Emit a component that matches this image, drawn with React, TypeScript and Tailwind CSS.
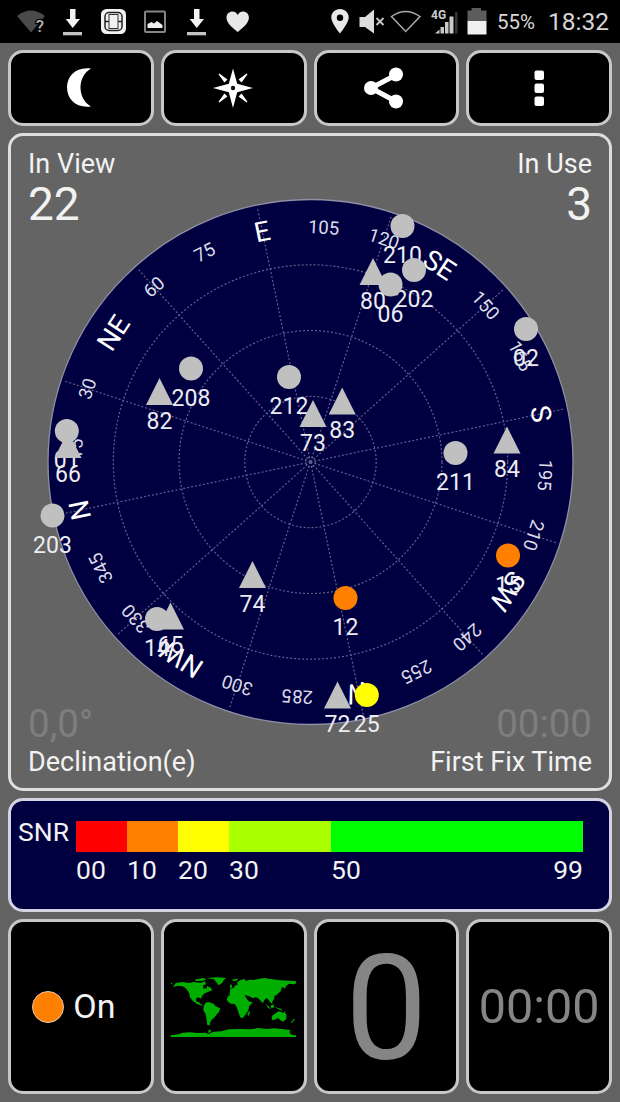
import React from "react";

const SPIN = -101.8;
const CX = 310.5;
const CY = 462;
const R = 263;

const labels: Record<number, string> = {
  0: "N", 45: "NE", 90: "E", 135: "SE", 180: "S", 225: "SW", 270: "W", 315: "NW",
};

type Sat = { k: "c" | "t"; x: number; y: number; id: string; fill?: string };

const sats: Sat[] = [
  { k: "c", x: 402.5, y: 226, id: "210" },
  { k: "t", x: 373, y: 271.5, id: "80" },
  { k: "c", x: 414, y: 270, id: "202" },
  { k: "c", x: 390.5, y: 284.5, id: "06" },
  { k: "c", x: 526, y: 329, id: "02" },
  { k: "c", x: 191, y: 368.5, id: "208" },
  { k: "t", x: 159.5, y: 391.5, id: "82" },
  { k: "c", x: 289, y: 377, id: "212" },
  { k: "t", x: 313, y: 413.5, id: "73" },
  { k: "t", x: 342.2, y: 401, id: "83" },
  { k: "c", x: 66.8, y: 431, id: "01" },
  { k: "t", x: 68, y: 444.5, id: "66" },
  { k: "c", x: 52.5, y: 515.5, id: "203" },
  { k: "c", x: 455.5, y: 453, id: "211" },
  { k: "t", x: 507, y: 440, id: "84" },
  { k: "c", x: 508, y: 555.5, id: "15", fill: "#ff8000" },
  { k: "c", x: 345.5, y: 598, id: "12", fill: "#ff8000" },
  { k: "t", x: 252.5, y: 574.5, id: "74" },
  { k: "c", x: 157, y: 619, id: "14" },
  { k: "t", x: 170.5, y: 616, id: "65" },
  { k: "t", x: 337.5, y: 695, id: "72" },
  { k: "c", x: 366.8, y: 695, id: "25", fill: "#ffff00" },
];

function Dial() {
  const marks = Array.from({ length: 24 }, (_, i) => i * 15);
  return (
    <svg viewBox="11 136 598 652" className="col-start-1 row-start-1 h-full w-full" fontFamily="Roboto, sans-serif" textAnchor="middle">
      <circle cx={CX} cy={CY} r={R - 0.5} fill="#000040" stroke="#8f8fa6" strokeWidth="1.3" />
      <g fill="none" stroke="#5f5f8c" strokeWidth="1.2" strokeDasharray="2 2">
        {[5, 65.7, 131.5, 197.2].map((r) => (
          <circle key={r} cx={CX} cy={CY} r={r} />
        ))}
        {marks.filter((a) => a % 30 === 0).map((a) => (
          <line key={a} x1={CX} y1={CY} x2={CX} y2={CY - R + 3} transform={`rotate(${a + SPIN} ${CX} ${CY})`} />
        ))}
      </g>
      {marks.map((a) => (
        <text
          key={a}
          x={CX}
          y={labels[a] ? CY - 226 : CY - 228.5}
          fontSize={labels[a] ? 27.5 : 18.5}
          fill={labels[a] ? "#ffffff" : "#dcdce8"}
          transform={`rotate(${a + SPIN} ${CX} ${CY})`}
        >
          {labels[a] ?? a}
        </text>
      ))}
      {sats.map((s) => (
        <g key={s.id}>
          {s.k === "c" ? (
            <circle cx={s.x} cy={s.y} r="12" fill={s.fill ?? "#c0c0c0"} />
          ) : (
            <path d={`M${s.x} ${s.y - 13.5}l13.5 27h-27z`} fill="#c0c0c0" />
          )}
          <text x={s.x} y={s.y + 37} fontSize="23" fill="#ececf2">
            {s.id}
          </text>
        </g>
      ))}
    </svg>
  );
}

function Download({ className }: { className: string }) {
  return (
    <svg viewBox="63 0 20 43" className={`h-[43px] w-5 ${className}`}>
      <path d="M70 9h5.500v10h4.500L72.700 28l-7-9H70z" fill="#f4f4f4" />
      <path d="M63 32h19v3.300H63z" fill="#c4c4c4" />
    </svg>
  );
}

function StatusBar() {
  return (
    <header className="flex h-[43px] items-center bg-black text-[#d6d6d6]">
      <svg viewBox="17 0 29 43" className="ml-[17px] h-[43px] w-[29px]">
        <path d="M17 16Q30.500 5 45 16L31 32.500z" fill="#4a4a4a" />
        <text x="40" y="32" fontSize="17" fontWeight="500" fontFamily="Roboto, sans-serif" fill="#b4b4b4" stroke="#000" strokeWidth="2.500" paintOrder="stroke" textAnchor="middle">?</text>
      </svg>
      <Download className="ml-[17px]" />
      <svg viewBox="101 0 25 43" className="ml-[18px] h-[43px] w-[25px]">
        <rect x="101" y="9" width="25" height="25" rx="5.500" fill="#f2f2f2" />
        <rect x="105" y="12.500" width="17" height="18" rx="4" fill="none" stroke="#222" strokeWidth="1.500" />
        <path d="M105 21.500h17" stroke="#222" strokeWidth="1.500" />
        <rect x="109" y="14.500" width="9" height="14" fill="#f2f2f2" stroke="#333" strokeWidth="1" />
      </svg>
      <svg viewBox="144 0 23 43" className="ml-[18px] h-[43px] w-[23px]">
        <rect x="145" y="11.500" width="20" height="20.500" rx="1" fill="none" stroke="#858585" strokeWidth="2" />
        <path d="M147.500 28v-4l4-2 2.500 1.500 3-2.500 5.500 4v3z" fill="#eee" />
      </svg>
      <Download className="ml-5" />
      <svg viewBox="226 0 24 43" className="ml-[19px] h-[43px] w-6">
        <path d="M237.700 32C230 26 226.500 22 226.500 17.500c0-6.500 8.500-8.500 11.200-2.500 2.700-6 11.200-4 11.200 2.500 0 4.500-3.500 8.500-11.200 14.500z" fill="#e8e8e8" />
      </svg>
      <div className="grow" />
      <svg viewBox="331 0 19 43" className="h-[43px] w-[19px]">
        <path fillRule="evenodd" d="M340 9c-5 0-8.700 3.700-8.700 8.300 0 6 8.700 16.200 8.700 16.200s8.700-10.200 8.700-16.200C348.700 12.700 345 9 340 9zm0 5.500a3.200 3.200 0 110 6.400 3.200 3.200 0 010-6.400z" fill="#e8e8e8" />
      </svg>
      <svg viewBox="359 0 26 43" className="ml-[9px] h-[43px] w-[26px]">
        <path d="M359.500 17h5.500l9-7.500v24L365 27h-5.500z" fill="#dcdcdc" />
        <path d="M376.500 18l7 7m0-7l-7 7" stroke="#c8c8c8" strokeWidth="1.800" />
      </svg>
      <svg viewBox="390 0 32 43" className="ml-[5px] h-[43px] w-8">
        <path d="M391.500 16.500Q405.500 6.500 420 16.500L405.700 31.500z" fill="none" stroke="#a8a8a8" strokeWidth="1.500" />
      </svg>
      <svg viewBox="431 0 28 43" className="ml-[9px] h-[43px] w-7">
        <path d="M435 33.500l4.500-4v4zM440.500 27h3.500v6.500h-3.500zM445 22h3.500v11.500H445zM449.500 16.500h4v17h-4z" fill="#c8c8c8" />
        <path d="M455 12h2.500v21.500H455z" fill="#363636" />
        <text x="431" y="19" fontSize="12" fontWeight="700" fontFamily="Roboto, sans-serif" fill="#ccc">4G</text>
      </svg>
      <svg viewBox="467 0 20 43" className="ml-2 h-[43px] w-5">
        <path d="M471.500 8h9.500v2.500h5.500V21h-19V10.500h4z" fill="#5c5c5c" />
        <path d="M467.500 21h19v13.500h-19z" fill="#f0f0f0" />
      </svg>
      <span className="mt-[2px] ml-[10px] w-[39px] text-[20.500px] leading-none whitespace-nowrap">55%</span>
      <span className="mt-[2px] mr-[11px] ml-[12px] w-[61px] text-[24.500px] leading-none whitespace-nowrap">18:32</span>
    </header>
  );
}

function Tile({ children }: { children: React.ReactNode }) {
  return (
    <div className="flex items-center justify-center overflow-hidden rounded-[15px] border-[3px] border-[#c8c8c8] bg-black text-[#858585]">
      {children}
    </div>
  );
}

const snr = [
  { label: "00", span: "w-[51px]", color: "bg-[#ff0000]" },
  { label: "10", span: "w-[51px]", color: "bg-[#ff8000]" },
  { label: "20", span: "w-[51px]", color: "bg-[#ffff00]" },
  { label: "30", span: "w-[102px]", color: "bg-[#aaff00]" },
  { label: "50", span: "w-[252px]", color: "bg-[#00ff00]" },
];

export default function App() {
  return (
    <div className="flex h-[1102px] w-[620px] flex-col overflow-hidden bg-[#626262] font-['Roboto',sans-serif] text-[#f2f2f2]">
      <StatusBar />
      <main className="flex grow flex-col gap-[7px] px-2 pt-[7px] pb-2">
        <nav className="grid h-[76px] grid-cols-4 gap-[7px]">
          <Tile>
            <svg viewBox="66 68 26 42" className="mr-[3px] h-[42px] w-[26px]">
              <path d="M91 69.500C76 67.500 67 77 67 88.500S76 109.500 91 107.500C77 99.500 77 77.500 91 69.500z" fill="#fff" />
            </svg>
          </Tile>
          <Tile>
            <svg viewBox="213 68.500 40 40" className="mr-px h-10 w-10">
              <g fill="#fff">
                <path d="M233 69l4.200 15.300 15.800 4.200-15.800 4.200L233 108.500l-4.200-15.800-15.800-4.200 15.800-4.200z" />
                <path d="M219 74.500l7.500 5.500-2 2zM247 74.500l-7.500 5.500 2 2zM219 102.500l7.500-5.500-2-2zM247 102.500l-7.500-5.500 2-2z" stroke="#fff" strokeWidth="1.200" />
              </g>
              <circle cx="233" cy="88.500" r="2.200" fill="#111" />
            </svg>
          </Tile>
          <Tile>
            <svg viewBox="363 66 42 44" className="mr-[5px] h-11 w-[42px]">
              <path d="M396 75L371 88l25 13.500" fill="none" stroke="#fff" strokeWidth="5" />
              <circle cx="396" cy="74.500" r="7" fill="#fff" />
              <circle cx="371" cy="88" r="7" fill="#fff" />
              <circle cx="396" cy="101.500" r="7" fill="#fff" />
            </svg>
          </Tile>
          <Tile>
            <svg viewBox="533 69 12 38" className="h-[38px] w-3" fill="#fff">
              <rect x="534.500" y="70.500" width="9.500" height="9.500" rx="2" />
              <rect x="534.500" y="83.500" width="9.500" height="9.500" rx="2" />
              <rect x="534.500" y="96.500" width="9.500" height="9.500" rx="2" />
            </svg>
          </Tile>
        </nav>

        <section className="grid h-[658px] grid-cols-1 grid-rows-1 rounded-[15px] border-[3px] border-[#dedede] bg-[#646464]">
          <Dial />
          <div className="col-start-1 row-start-1 flex flex-col justify-between px-[17px] pt-[13px] pb-[11px] text-[27px] leading-[30px]">
            <div className="flex justify-between">
              <div>
                <div>In View</div>
                <div className="text-[46px] leading-[50px]">22</div>
              </div>
              <div className="text-right">
                <div>In Use</div>
                <div className="text-[46px] leading-[50px]">3</div>
              </div>
            </div>
            <div className="flex justify-between">
              <div>
                <div className="text-[38.500px] leading-[46px] text-[#7e7e7e]">0,0°</div>
                <div>Declination(e)</div>
              </div>
              <div className="text-right">
                <div className="text-[38.500px] leading-[46px] text-[#7e7e7e]">00:00</div>
                <div>First Fix Time</div>
              </div>
            </div>
          </div>
        </section>

        <section className="flex h-[114px] rounded-[15px] border-[3px] border-[#d4d4e4] bg-[#000040] pt-5 pl-[7px] text-[26.500px] leading-[30px]">
          <div className="-mt-1 w-[58px]">SNR</div>
          <div className="relative flex">
            {snr.map((s) => (
              <div key={s.label} className={s.span}>
                <div className={`h-[31px] ${s.color}`} />
                <div className="mt-[3px]">{s.label}</div>
              </div>
            ))}
            <div className="absolute right-0 bottom-auto mt-[34px]">99</div>
          </div>
        </section>

        <section className="grid h-[175px] grid-cols-4 gap-[7px]">
          <Tile>
            <div className="flex items-center gap-[9px] pr-[14px] text-[34px] text-[#f2f2f2]">
              <span className="h-8 w-8 rounded-full border border-[#e8c8a8] bg-[#ff8000]" />
              <span>On</span>
            </div>
          </Tile>
          <Tile>
            <svg viewBox="32 36 377 183" className="mt-[2px] mr-[2px] h-[61px] w-[126px] shrink-0" fill="#00ae00">
              <path d="M34 53h4v4h-4zM49 54l18-3 22 3 14-3 20 2 13-4 4 8-10 5 2 9 9-1 2-7 11 5 4 8-13 5-9 4-8 7-3 9-9-4-7 4 2 9 7 1 5 6 7 3-4 2-14-6-12-8-9-12-2-12-8-12-11-8-14-2-16 4zM105 44l24-5 12 3-10 5-22 1zM139 40l31-3 30 2-7 6-5 9-11 7-6-9-8-9-20-3z" />
              <path d="M138 113l10-2 14 5 7 8 13 6-4 12-7 7-7 9-6 5-6 9-2 10-7-3-2-18-3-15-7-11 2-12zM148 194l7 1-2 6-8 3z" />
              <path d="M204 97l10-11 14-1 14 4 12-1 8 14 8 8 10 1-11 13-3 13-6 9-7 9-5 5-6-3-5-15-5-15-6-10-12-1-9-6-3-7zM268 139l4 1-4 12-5-2zM211 83l1-11 10-3 4-7 8-2-1-8 10-7 11-3 6 6 10-4 12 1 18-4 15-2 18 3 30 4 30 1 23 2v5l-15 4-11-2-8 5-7 10-5-5-8 5-2 9-6 8-9 5-1 9-6 8 1 7-7-5-5-7-5-6-7 5-5 11-8-9-7-7-9-2-5 3-12-6-10-3-14-2-4 5-7-8-8 2 4 8-10-10-10 1-5 6z" />
              <path d="M211 61l5-3 2 9-6 4zM217 44l16-3 3 4-14 4zM359 76l4-8 4-1-4 13-6 4zM318 117l9 7 7 9-8-4zM333 122l9-4 2 9-8 3zM347 127l12 3 14 7-12-2zM337 153l11-8 9-6 8 1 5 5 5-6 6 12-1 11-9 8-8-4-7-6-10 4-9 1zM402 162l4 1-9 11-3-1zM33 211l25-3 8-4 24-2 24 2 23-1 10 4 15-7 24-1 22-6 34-1 31 1 24-4 25 3 22-2 24 2 25 3-4 7 7 7 15 2v5H33z" />
            </svg>
          </Tile>
          <Tile>
            <span className="mt-[5px] text-[147px] leading-none">0</span>
          </Tile>
          <Tile>
            <span className="mt-[2px] text-[48.500px] leading-none">00:00</span>
          </Tile>
        </section>
      </main>
    </div>
  );
}
